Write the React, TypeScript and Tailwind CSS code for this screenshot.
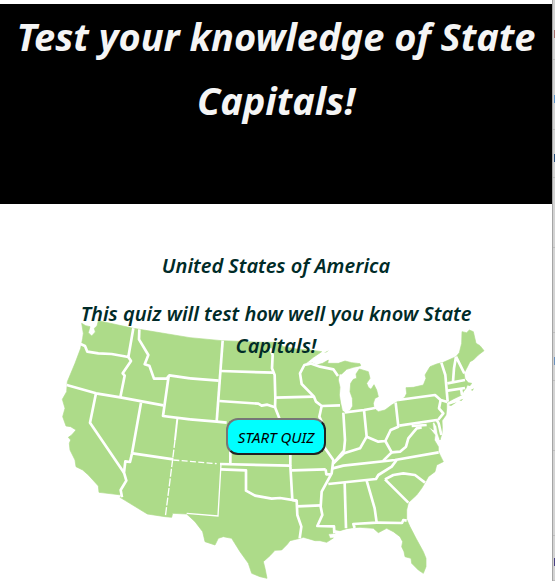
import React from "react";

const coast =
  "M95 70L107 77L120 80L115 98L125 108L136 96L133 85L141 78L145 62L250 85L420 113L515 122L640 127L685 127L700 140L740 147L780 150L815 155L790 172L765 192L785 188L800 195L818 190L835 180L833 190L865 190L885 183L905 188L930 191L932 197L910 202L890 208L875 222L868 222L865 240L870 262L868 285L872 310L877 332L885 338L900 332L908 318L907 295L900 275L902 250L910 238L920 235L918 222L928 207L955 215L960 235L950 250L955 262L963 268L972 254L980 270L985 290L975 295L970 310L972 325L985 335L1005 330L1025 315L1042 305L1055 300L1065 290L1070 280L1068 263L1090 262L1120 255L1128 235L1125 225L1140 200L1160 192L1180 187L1218 170L1228 158L1235 130L1236 95L1250 98L1258 90L1270 95L1278 130L1290 137L1302 152L1285 165L1270 180L1260 185L1250 205L1242 220L1245 237L1255 248L1265 250L1260 257L1252 255L1248 265L1240 275L1235 285L1210 297L1190 308L1190 325L1188 345L1176 362L1177 385L1176 400L1170 420L1163 400L1160 380L1152 365L1148 370L1150 390L1135 380L1155 405L1153 420L1165 440L1165 455L1180 485L1160 495L1155 515L1135 530L1125 548L1115 565L1100 585L1075 608L1070 630L1070 658L1080 680L1098 715L1120 755L1128 775L1128 800L1120 820L1105 810L1085 790L1083 775L1065 770L1062 755L1055 740L1058 725L1050 710L1030 695L1010 685L985 698L970 685L930 682L910 683L890 686L870 692L848 688L855 700L835 702L840 715L850 714L830 727L810 722L795 722L775 716L760 712L750 715L720 722L712 733L695 750L675 751L660 767L640 785L645 805L651 835L630 830L605 820L595 790L570 755L545 715L520 710L505 715L495 735L465 725L458 695L435 665L410 642L368 640L365 652L345 650L292 642L210 592L215 585L147 577L145 558L115 525L98 510L78 500L75 480L60 450L58 430L62 420L55 412L65 405L78 390L62 380L48 378L38 350L45 325L37 298L50 275L52 245L75 190L92 145L98 115L100 100Z";

const westBorders = [
  "M92 132L105 138L112 155L145 160L185 162L235 171L250 85",
  "M235 171L243 183L218 220L224 227L211 292",
  "M268 88L267 118L295 165L290 178L284 193L298 197L312 236L350 236L358 226L420 235",
  "M50 255L138 280L211 292L340 316",
  "M356 228L339 348L420 358",
  "M138 280L120 368L222 518",
  "M273 308L246 460L240 486L226 484L222 518L229 542L212 570L216 592",
  "M248 460L370 478",
];

const plainsBorders = [
  "M420 235L506 242",
  "M420 358L500 365L530 368",
  "M518 122L500 365",
  "M513 213L670 218",
  "M508 303L625 311L635 317L652 314L675 322L688 355",
  "M660 145L668 165L666 205L674 225L676 293L675 322",
  "M676 293L792 290",
  "M785 190L763 195L750 220L755 252L792 290L798 305L815 318L808 350L822 380",
  "M541 450L541 492M510 492L720 497M513 508L588 511L588 572L615 587L665 596L690 594L740 602",
  "M721 450L721 497L727 600L740 602L742 645L754 680L749 715",
  "M688 355L705 385L721 410V450",
  "M726 511L827 508M742 619L812 616",
];

const eastBorders = [
  "M780 190L810 200L850 208L864 228",
  "M815 318L870 316",
  "M880 338L885 420L882 452L850 490",
  "M885 337L942 330L975 324",
  "M942 330L950 410L930 445L882 460L850 490",
  "M950 410L985 425L1006 423L1022 390L1045 380L1037 308",
  "M1045 300L1155 285L1172 300L1192 306",
  "M1048 377L1160 360L1166 370L1174 405",
  "M1172 300L1167 325L1180 340L1164 360",
  "M1174 188L1186 225L1193 305M1218 170L1212 205L1209 245M1218 170L1243 220",
  "M1192 250L1245 240M1193 272L1245 264M1233 265L1236 285",
  "M1006 423L1025 457L1050 455L1068 440L1075 415L1100 385L1115 382",
  "M1085 378L1130 375",
  "M1025 457L1000 482",
  "M848 505L880 497L1035 480L1166 457",
  "M1040 480L1025 500L985 525L978 537L835 552",
  "M1005 538L1030 525L1060 520L1095 525L1125 548M1005 538L1075 608",
  "M822 380L822 440L850 480L845 520L815 575L812 620L817 645L802 678L852 679L853 700",
  "M827 508L829 523L842 523",
  "M884 549L888 685",
  "M950 542L974 625L980 668L910 672L914 684",
  "M980 668L1056 669L1060 660L1070 662",
];

function UnitedStatesMap() {
  return (
    <svg
      viewBox="-150 -288 1656 1131"
      className="col-start-1 row-start-1 h-auto w-full"
      aria-hidden="true"
    >
      <path d={coast} fill="#addb89" stroke="#addb89" strokeWidth="2" strokeLinejoin="round" />
      <g fill="#addb89">
        <path d="M822 158L837 151L830 157ZM1262 270L1272 265L1268 272ZM1195 315L1220 307L1203 318ZM1228 301L1240 296L1234 303Z" />
      </g>
      <g fill="none" stroke="#fff" strokeWidth="8" strokeLinejoin="round">
        {[...westBorders, ...plainsBorders, ...eastBorders].map((d) => (
          <path key={d} d={d} />
        ))}
      </g>
      <g fill="none" stroke="#fff" strokeWidth="4">
        <path d="M382 356L375 420" strokeWidth="6" />
        <path d="M375 420L368 478L346 650" strokeDasharray="24 5" />
        <path d="M370 480L500 491" strokeDasharray="18 7" />
        <path d="M513 492L504 648L410 640" />
      </g>
    </svg>
  );
}

const rows = [
  { size: "h-[60px]", mark: "bg-[#a56f6c]" },
  { size: "h-[70px]", mark: "bg-[#5b93c9]" },
  { size: "h-12", mark: "bg-[#254c78]" },
  { size: "h-[70px]", mark: "" },
  { size: "h-[85px]", mark: "" },
  { size: "h-12", mark: "bg-[#6b91bd]" },
  { size: "h-[70px]", mark: "" },
  { size: "h-[85px]", mark: "" },
  { size: "h-[45px]", mark: "bg-[#494083]" },
];

function SideStrip() {
  return (
    <aside className="w-[3px] shrink-0 overflow-hidden border-l border-[#a5a5a5] bg-[#d3d3d3]">
      {rows.map((row, i) => (
        <div key={i} className={`flex flex-col items-end border-b border-[#bdbdbd] ${row.size}`}>
          <div className="h-1/2" />
          {row.mark && <div className={`h-2 w-px ${row.mark}`} />}
        </div>
      ))}
    </aside>
  );
}

export default function App() {
  return (
    <div className="flex bg-white font-['Noto_Sans',sans-serif] italic">
      <div className="min-w-0 flex-1">
        <header className="mt-1 min-h-[200px] bg-black">
          <h1 className="text-center text-[38px] leading-[64px] font-bold text-[#f5f5f5]">
            Test your knowledge of State Capitals!
          </h1>
        </header>
        <main className="grid">
          <UnitedStatesMap />
          <div className="z-10 col-start-1 row-start-1 flex flex-col items-center px-16 pt-[46px] text-center text-xl leading-8 font-semibold text-[#002b28]">
            <h2>United States of America</h2>
            <p className="mt-4">This quiz will test how well you know State Capitals!</p>
            <button
              type="button"
              className="mt-14 h-[37px] w-[100px] rounded-xl border-2 border-t-[#767676] border-r-[#222] border-b-[#222] border-l-[#767676] bg-[#00ffff] text-[15px] font-normal whitespace-nowrap text-black italic"
            >
              START QUIZ
            </button>
          </div>
        </main>
      </div>
      <SideStrip />
    </div>
  );
}
